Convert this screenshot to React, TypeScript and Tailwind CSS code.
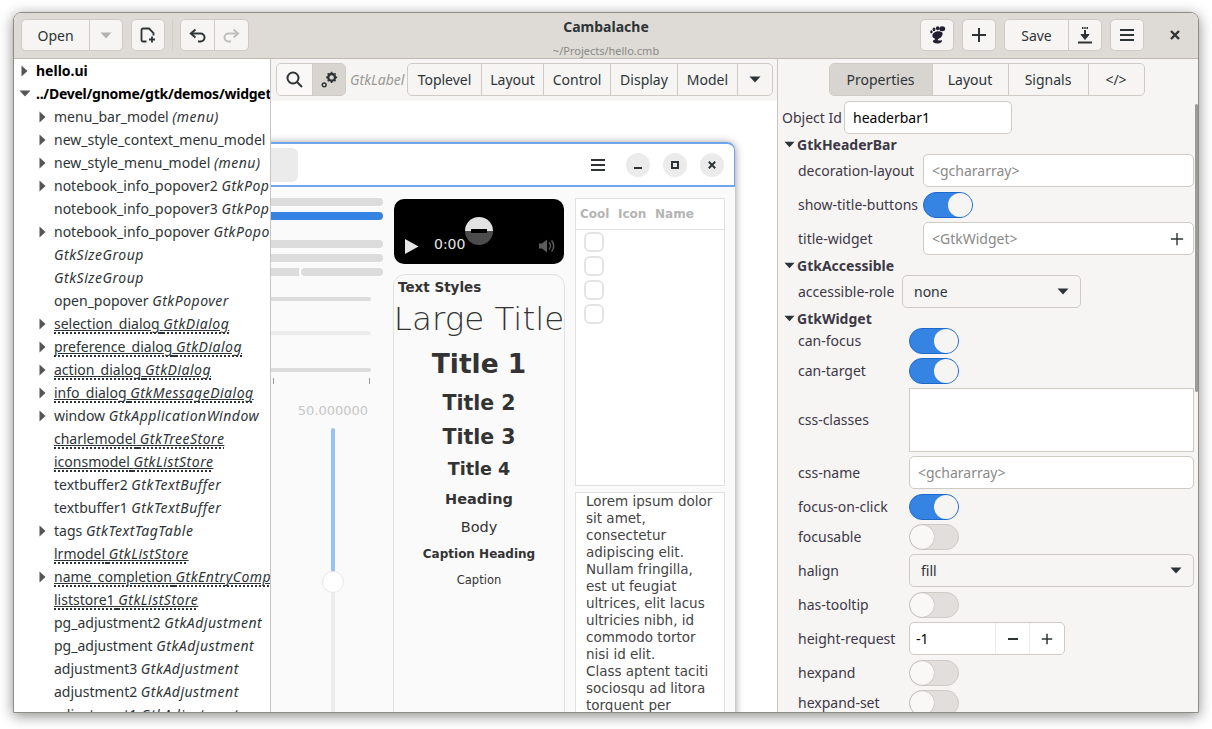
import { ReactNode } from "react"

interface TreeItem {
    name: string
    type?: string
    arrow?: boolean
    warn?: boolean
}

const treeItems: TreeItem[] = [
    { name: "menu_bar_model", type: "(menu)", arrow: true },
    { name: "new_style_context_menu_model", arrow: true },
    { name: "new_style_menu_model", type: "(menu)", arrow: true },
    { name: "notebook_info_popover2", type: "GtkPopover", arrow: true },
    { name: "notebook_info_popover3", type: "GtkPopover" },
    { name: "notebook_info_popover", type: "GtkPopover", arrow: true },
    { name: "", type: "GtkSizeGroup" },
    { name: "", type: "GtkSizeGroup" },
    { name: "open_popover", type: "GtkPopover" },
    { name: "selection_dialog", type: "GtkDialog", arrow: true, warn: true },
    { name: "preference_dialog", type: "GtkDialog", arrow: true, warn: true },
    { name: "action_dialog", type: "GtkDialog", arrow: true, warn: true },
    { name: "info_dialog", type: "GtkMessageDialog", arrow: true, warn: true },
    { name: "window", type: "GtkApplicationWindow", arrow: true },
    { name: "charlemodel", type: "GtkTreeStore", warn: true },
    { name: "iconsmodel", type: "GtkListStore", warn: true },
    { name: "textbuffer2", type: "GtkTextBuffer" },
    { name: "textbuffer1", type: "GtkTextBuffer" },
    { name: "tags", type: "GtkTextTagTable", arrow: true },
    { name: "lrmodel", type: "GtkListStore", warn: true },
    { name: "name_completion", type: "GtkEntryCompletion", arrow: true, warn: true },
    { name: "liststore1", type: "GtkListStore", warn: true },
    { name: "pg_adjustment2", type: "GtkAdjustment" },
    { name: "pg_adjustment", type: "GtkAdjustment" },
    { name: "adjustment3", type: "GtkAdjustment" },
    { name: "adjustment2", type: "GtkAdjustment" },
    { name: "adjustment1", type: "GtkAdjustment" },
]

const lorem = [
    "Lorem ipsum dolor",
    "sit amet,",
    "consectetur",
    "adipiscing elit.",
    "Nullam fringilla,",
    "est ut feugiat",
    "ultrices, elit lacus",
    "ultricies nibh, id",
    "commodo tortor",
    "nisi id elit.",
    "Class aptent taciti",
    "sociosqu ad litora",
    "torquent per",
]

const ArrowRight = () => (
    <svg width="7" height="12" viewBox="0 0 7 12" className="shrink-0"><path d="M0.5 0.5 L6.5 6 L0.5 11.5 Z" fill="#555" /></svg>
)

const ArrowDown = ({ color = "#555", w = 12 }: { color?: string, w?: number }) => (
    <svg width={w} height="7" viewBox="0 0 12 7" className="shrink-0"><path d="M0.5 0.5 H11.5 L6 6.5 Z" fill={color} /></svg>
)

const IconNew = () => (
    <svg width="16" height="16" viewBox="0 0 16 16" fill="none" stroke="#2e3436" strokeWidth="1.8">
        <path d="M6.5 14.5 H3 A1.5 1.5 0 0 1 1.5 13 V3 A1.5 1.5 0 0 1 3 1.5 H9 L13.5 6 V8.5" />
        <path d="M12 9.5 V15.5 M9 12.5 H15" />
    </svg>
)

const IconUndo = ({ color = "#2e3436", flip = false }: { color?: string, flip?: boolean }) => (
    <svg width="17" height="15" viewBox="0 0 17 15" fill="none" stroke={color} strokeWidth="2" className={flip ? "-scale-x-100" : ""}>
        <path d="M6.5 1.5 L1.8 5.5 L6.5 9.5" />
        <path d="M2 5.5 H11.5 A4 4 0 0 1 11.5 13.5 H9" />
    </svg>
)

const IconFoot = () => (
    <svg width="17" height="18" viewBox="0 0 17 18" fill="#241f31">
        <ellipse cx="13.2" cy="2.8" rx="3" ry="2.5" />
        <ellipse cx="8.6" cy="2.2" rx="1.7" ry="2" />
        <ellipse cx="5" cy="3.4" rx="1.4" ry="1.8" />
        <ellipse cx="2.4" cy="5.8" rx="1.2" ry="1.6" />
        <path d="M11 5.4 C7 4.8 3 7 3.4 10.2 C3.7 12.2 6.2 12 6.1 13.1 C5.9 14.4 4 14 3.8 15.2 C3.6 16.8 7 18.2 10.4 17.2 C12.6 16.6 13.6 15 13 14.4 C12 13.6 9.6 15.2 8.9 14 C8.3 12.8 10.8 12.6 12.2 11 C14 9 14.6 5.8 11 5.4 Z" />
    </svg>
)

const IconPlus = ({ size = 16, sw = 2 }: { size?: number, sw?: number }) => (
    <svg width={size} height={size} viewBox="0 0 16 16" fill="none" stroke="#2e3436" strokeWidth={sw}><path d="M8 1 V15 M1 8 H15" /></svg>
)

const IconMinus = () => (
    <svg width="12" height="12" viewBox="0 0 12 12" fill="none" stroke="#2e3436" strokeWidth="2"><path d="M1 6 H11" /></svg>
)

const IconSaveAs = () => (
    <svg width="14" height="17" viewBox="0 0 14 17" fill="none" stroke="#2e3436">
        <path d="M4 1 H5.5 M6.3 1 H7.7 M8.5 1 H10" strokeWidth="2" />
        <path d="M7 3 V11" strokeWidth="2" />
        <path d="M3 7.5 L7 12.5 L11 7.5 Z" fill="#2e3436" strokeWidth="1" />
        <path d="M0 15.5 H14" strokeWidth="2" />
    </svg>
)

const IconMenu = () => (
    <svg width="14" height="12" viewBox="0 0 14 12" fill="none" stroke="#2e3436" strokeWidth="2"><path d="M0 1 H14 M0 6 H14 M0 11 H14" /></svg>
)

const IconClose = ({ size = 10 }: { size?: number }) => (
    <svg width={size} height={size} viewBox="0 0 10 10" fill="none" stroke="#2e3436" strokeWidth="2.4"><path d="M1 1 L9 9 M9 1 L1 9" /></svg>
)

const IconSearch = () => (
    <svg width="17" height="17" viewBox="0 0 17 17" fill="none" stroke="#2e3436" strokeWidth="2">
        <circle cx="7" cy="7" r="5.5" />
        <path d="M11 11 L16 16" />
    </svg>
)

const IconGear = () => (
    <svg width="17" height="17" viewBox="0 0 16 16" fill="none" stroke="#2e3436">
        <circle cx="10" cy="6" r="3.2" strokeWidth="2.2" />
        <path d="M10 0.8 V11.2 M4.8 6 H15.2 M6.3 2.3 L13.7 9.7 M13.7 2.3 L6.3 9.7" strokeWidth="1.6" strokeDasharray="1.8 6.8" />
        <circle cx="3" cy="13" r="1.8" strokeWidth="1.4" />
    </svg>
)

const btn = "bg-[#f6f5f4] border border-[#cfcac4] rounded-[5px] h-[32px] flex items-center justify-center"

const HeaderBar = () => (
    <div className="relative h-[46px] shrink-0 bg-[#dedbd7] border-b border-[#bfb9b2] flex items-start pt-[6px] pl-[7px]">
        <div className={`${btn} w-[102px]`}>
            <div className="w-[67px] text-center">Open</div>
            <div className="flex-1 h-full border-l border-[#cfcac4] flex items-center justify-center"><ArrowDown color="#b5b3b0" /></div>
        </div>
        <div className={`${btn} w-[34px] ml-[8px]`}><IconNew /></div>
        <div className="w-px h-[32px] bg-[#d2cec9] ml-[7px]" />
        <div className={`${btn} w-[69px] ml-[7px]`}>
            <div className="w-[34px] h-full border-r border-[#cfcac4] flex items-center justify-center"><IconUndo /></div>
            <div className="flex-1 flex items-center justify-center"><IconUndo color="#c0bfbd" flip /></div>
        </div>
        <div className="absolute left-0 right-0 top-[4px] text-center pointer-events-none">
            <div className="font-bold text-[14px] leading-[20px] text-[#2e3436]">Cambalache</div>
            <div className="text-[11px] leading-[14px] mt-[7px] text-[#888a85]">~/Projects/hello.cmb</div>
        </div>
        <div className={`${btn} w-[34px] ml-auto`}><IconFoot /></div>
        <div className={`${btn} w-[34px] ml-[8px]`}><IconPlus /></div>
        <div className={`${btn} w-[98px] ml-[8px]`}>
            <div className="w-[63px] text-center">Save</div>
            <div className="flex-1 h-full border-l border-[#cfcac4] flex items-center justify-center"><IconSaveAs /></div>
        </div>
        <div className={`${btn} w-[34px] ml-[8px]`}><IconMenu /></div>
        <div className="w-[54px] h-[32px] flex items-center justify-center pl-[8px]"><IconClose /></div>
    </div>
)

const Warn = ({ children }: { children: ReactNode }) => (
    <span className="underline underline-offset-1">
        <span className="underline decoration-dotted decoration-2 underline-offset-[3px]">{children}</span>
    </span>
)

const TreeRow = ({ item }: { item: TreeItem }) => {
    const label = (
        <>
            {item.name}{item.name && item.type ? " " : ""}
            {item.type && <i className="tracking-[0.5px]">{item.type}</i>}
        </>
    )
    return (
        <div className="h-[23px] flex items-center pl-[25px] text-[#2e3436]">
            <div className="w-[15px] shrink-0">{item.arrow && <ArrowRight />}</div>
            <div>{item.warn ? <Warn>{label}</Warn> : label}</div>
        </div>
    )
}

const Tree = () => (
    <div className="w-[256px] shrink-0 bg-white overflow-hidden whitespace-nowrap">
        <div className="h-[23px] flex items-center pl-[7px] font-bold text-black">
            <div className="w-[15px] shrink-0"><ArrowRight /></div>hello.ui
        </div>
        <div className="h-[23px] flex items-center pl-[5px] font-bold text-black tracking-[-0.25px]">
            <div className="w-[17px] shrink-0"><ArrowDown /></div>../Devel/gnome/gtk/demos/widget-factory/
        </div>
        {treeItems.map((item, i) => <TreeRow key={i} item={item} />)}
    </div>
)

const Toolbar = () => (
    <div className="h-[42px] shrink-0 bg-[#f6f5f4] flex items-start pt-[4px] pl-[5px]">
        <div className="flex h-[33px] w-[70px] rounded-[5px] border border-[#cfcac4] overflow-hidden">
            <div className="w-[35px] bg-[#f9f8f7] flex items-center justify-center"><IconSearch /></div>
            <div className="flex-1 bg-[#d8d5d0] border-l border-[#cfcac4] flex items-center justify-center"><IconGear /></div>
        </div>
        <div className="w-[61px] h-[33px] flex items-center pl-[4px] italic text-[#9a9996] overflow-hidden">GtkLabel</div>
        <div className="flex h-[33px] rounded-[5px] border border-[#cfcac4] bg-[#f6f5f4] text-[#2e3436]">
            {["Toplevel", "Layout", "Control", "Display", "Model"].map((t, i) => (
                <div key={t} className={`flex items-center justify-center border-r border-[#cfcac4] ${["w-[74px]", "w-[62px]", "w-[67px]", "w-[67px]", "w-[60px]"][i]}`}>{t}</div>
            ))}
            <div className="w-[34px] flex items-center justify-center"><ArrowDown color="#2e3436" /></div>
        </div>
    </div>
)

const Bar = ({ className }: { className: string }) => <div className={`rounded-full ${className}`} />

const PreviewLeft = () => (
    <div className="w-[202px] shrink-0 flex flex-col">
        <Bar className="h-[8px] bg-[#dcdcdc]" />
        <Bar className="h-[8px] bg-[#3584e4] mt-[6px]" />
        <Bar className="h-[8px] bg-[#dcdcdc] mt-[20px]" />
        <Bar className="h-[8px] bg-[#dcdcdc] mt-[6px]" />
        <div className="flex mt-[6px] gap-[2px]">
            <div className="w-[118px] h-[8px] bg-[#dcdcdc]" />
            <Bar className="flex-1 h-[8px] bg-[#dcdcdc]" />
        </div>
        <Bar className="h-[4px] bg-[#dcdcdc] mt-[21px] mr-[12px]" />
        <Bar className="h-[4px] bg-[#ececec] mt-[30px] mr-[12px]" />
        <Bar className="h-[4px] bg-[#dcdcdc] mt-[33px] mr-[12px]" />
        <div className="flex justify-end mr-[13px] mt-[6px] gap-[95px]">
            <div className="w-px h-[6px] bg-[#9a9a9a]" />
            <div className="w-px h-[6px] bg-[#9a9a9a]" />
        </div>
        <div className="ml-auto w-[100px] flex flex-col items-center mt-[18px]">
            <div className="h-[17px] leading-[17px] text-[13px] text-[#c6c6c6]">50.000000</div>
            <div className="w-[4px] h-[144px] bg-[#99c1f1] mt-[9px] rounded-t-full" />
            <div className="w-[22px] h-[22px] rounded-full bg-white border border-[#e8e8e8] -my-px z-10" />
            <div className="w-[4px] h-[140px] bg-[#ececec]" />
        </div>
    </div>
)

const styleRow = "flex items-center justify-center text-[#333]"

const PreviewMiddle = () => (
    <div className="w-[172px] shrink-0 flex flex-col">
        <div className="relative h-[65px] mt-px mx-px bg-black rounded-[10px]">
            <svg className="absolute left-[71px] top-[18px]" width="28" height="28" viewBox="0 0 28 28">
                <path d="M0 14 A14 14 0 0 1 28 14 Z" fill="#e2e2e2" />
                <path d="M0 14 A14 14 0 0 0 28 14 Z" fill="#4c4c4c" />
                <rect x="6" y="12" width="16" height="4" fill="#000" />
            </svg>
            <svg className="absolute left-[11px] top-[40px]" width="14" height="15" viewBox="0 0 14 15"><path d="M0 0 L13.5 7.5 L0 15 Z" fill="#e6e6e6" /></svg>
            <div className="absolute left-[40px] top-[37px] text-[14px] leading-[17px] text-[#e6e6e6]">0:00</div>
            <svg className="absolute left-[145px] top-[40px]" width="16" height="14" viewBox="0 0 16 14" fill="none">
                <path d="M0 4.5 H3 L8 0.5 V13.5 L3 9.5 H0 Z" fill="#5c5c5c" />
                <path d="M10 3.5 A5 5 0 0 1 10 10.5 M12.5 1.5 A8 8 0 0 1 12.5 12.5" stroke="#5c5c5c" strokeWidth="1.5" />
            </svg>
        </div>
        <div className="mt-[10px] h-[500px] border border-[#e0e0e0] rounded-t-[12px] overflow-hidden">
            <div className="h-[25px] pl-[4px] flex items-center font-bold text-[13.5px] text-[#333]">Text Styles</div>
            <div className={`${styleRow} h-[38px] text-[32.5px] font-extralight whitespace-nowrap`}>Large Title</div>
            <div className={`${styleRow} h-[52px] text-[26.5px] font-bold`}>Title 1</div>
            <div className={`${styleRow} h-[28px] pb-[2px] text-[20.5px] font-bold`}>Title 2</div>
            <div className={`${styleRow} h-[39px] text-[20.5px] font-bold`}>Title 3</div>
            <div className={`${styleRow} h-[24px] text-[17.5px] font-bold`}>Title 4</div>
            <div className={`${styleRow} h-[38px] text-[14.5px] font-bold`}>Heading</div>
            <div className={`${styleRow} h-[18px] text-[14.5px]`}>Body</div>
            <div className={`${styleRow} h-[34px] text-[12px] font-bold`}>Caption Heading</div>
            <div className={`${styleRow} h-[18px] pt-[2px] text-[11.5px]`}>Caption</div>
        </div>
    </div>
)

const PreviewRight = () => (
    <div className="w-[150px] shrink-0 flex flex-col">
        <div className="h-[288px] border border-[#e0e0e0] bg-white">
            <div className="h-[31px] border-b border-[#e0e0e0] flex items-center font-bold text-[12px] text-[#b4b4b4]">
                <div className="w-[38px] pl-[4px]">Cool</div>
                <div className="w-[37px] pl-[4px]">Icon</div>
                <div className="pl-[4px]">Name</div>
            </div>
            <div className="flex flex-col gap-[4px] pt-[2px] pl-[8px]">
                {[0, 1, 2, 3].map(i => <div key={i} className="w-[20px] h-[20px] border-2 border-[#e4e4e4] rounded-[6px]" />)}
            </div>
        </div>
        <div className="mt-[6px] h-[260px] border border-[#e0e0e0] bg-white pl-[10px] text-[13.5px] leading-[17px] text-[#444] whitespace-nowrap">
            {lorem.map(l => <div key={l}>{l}</div>)}
        </div>
    </div>
)

const PreviewWindow = () => (
    <div className="absolute right-[42px] top-[41px] w-[564px] h-[640px] bg-[#fafafa] rounded-t-[8px] shadow-[0_1px_8px_rgba(0,0,0,0.45)] font-['DejaVu_Sans',sans-serif]">
        <div className="h-[45px] bg-white rounded-t-[8px] border-t-2 border-b-2 border-x border-[#6ea5ec] flex items-center justify-end">
            <div className="mr-[auto] ml-[85px] w-[41px] h-[34px] bg-[#ebebeb] rounded-[6px]" />
            <IconMenu />
            <div className="w-[24px] h-[24px] rounded-full bg-[#ebebeb] flex items-center justify-center ml-[21px] pt-[6px]"><div className="w-[8px] h-[2px] bg-[#2e3436]" /></div>
            <div className="w-[24px] h-[24px] rounded-full bg-[#ebebeb] flex items-center justify-center ml-[13px]"><div className="w-[8px] h-[8px] border-2 border-[#2e3436]" /></div>
            <div className="w-[24px] h-[24px] rounded-full bg-[#ebebeb] flex items-center justify-center ml-[13px] mr-[10px]"><IconClose size={8} /></div>
        </div>
        <div className="flex pt-[11px] pl-[10px] gap-[10px]">
            <PreviewLeft />
            <PreviewMiddle />
            <PreviewRight />
        </div>
    </div>
)

const Canvas = () => (
    <div className="w-[507px] shrink-0 flex flex-col border-l border-[#c9c4bd]">
        <Toolbar />
        <div className="relative flex-1 bg-white overflow-hidden">
            <PreviewWindow />
        </div>
    </div>
)

const Switch = ({ on }: { on?: boolean }) => (
    on ? (
        <div className="w-[50px] h-[26px] rounded-full bg-[#3584e4] border border-[#1b6acb] flex justify-end items-center">
            <div className="w-[24px] h-[24px] rounded-full bg-[#f6f5f4]" />
        </div>
    ) : (
        <div className="w-[50px] h-[26px] rounded-full bg-[#e1dedb] border border-[#cfcac4] flex items-center">
            <div className="w-[24px] h-[24px] rounded-full bg-[#f9f8f7] shadow-[0_0_1px_rgba(0,0,0,0.4)]" />
        </div>
    )
)

const entry = "h-[33px] bg-white border border-[#cfcac4] rounded-[5px] flex items-center pl-[8px]"

const Placeholder = ({ text, plus }: { text: string, plus?: boolean }) => (
    <div className={`${entry} text-[#8a8a88] justify-between pr-[9px]`}>
        {text}
        {plus && <IconPlus size={14} sw={1.6} />}
    </div>
)

const Select = ({ value, className }: { value: string, className?: string }) => (
    <div className={`h-[33px] bg-[#f6f5f4] border border-[#cfcac4] rounded-[5px] flex items-center justify-between pl-[11px] pr-[11px] text-[#2e3436] ${className ?? ""}`}>
        {value}
        <ArrowDown color="#2e3436" />
    </div>
)

const Row = ({ label, cols, mt, up, children }: { label: string, cols: string, mt: string, up?: boolean, children: ReactNode }) => (
    <div className={`grid items-center pl-[20px] pr-[4px] ${cols} ${mt}`}>
        <div className={`whitespace-nowrap text-[#3d3846] ${up ? "pb-[2px]" : ""}`}>{label}</div>
        {children}
    </div>
)

const Section = ({ title, mt }: { title: string, mt: string }) => (
    <div className={`h-[17px] flex items-center pl-[6px] gap-[2px] font-bold text-[#3d3846] ${mt}`}>
        <ArrowDown color="#2e3436" w={11} />{title}
    </div>
)

const g1 = "grid-cols-[125px_1fr]"
const g3 = "grid-cols-[111px_1fr]"

const Properties = () => (
    <div className="relative flex-1 bg-[#f6f5f4] border-l border-[#c9c4bd] flex flex-col overflow-hidden">
        <div className="flex justify-center pt-[4px] pr-[3px]">
            <div className="flex h-[33px] rounded-[5px] border border-[#cfcac4] text-[#2e3436]">
                <div className="w-[102px] bg-[#d8d5d0] flex items-center justify-center rounded-l-[4px]">Properties</div>
                <div className="w-[76px] border-l border-[#cfcac4] flex items-center justify-center">Layout</div>
                <div className="w-[80px] border-l border-[#cfcac4] flex items-center justify-center">Signals</div>
                <div className="w-[56px] border-l border-[#cfcac4] flex items-center justify-center">&lt;/&gt;</div>
            </div>
        </div>
        <div className="grid grid-cols-[62px_168px] items-center pl-[4px] mt-[5px]">
            <div className="whitespace-nowrap text-[#3d3846]">Object Id</div>
            <div className={`${entry} text-black`}>headerbar1</div>
        </div>
        <Section title="GtkHeaderBar" mt="mt-[2px]" />
        <Row label="decoration-layout" cols={g1} mt="mt-px"><Placeholder text="<gchararray>" /></Row>
        <Row label="show-title-buttons" cols={g1} mt="mt-[5px]" up><Switch on /></Row>
        <Row label="title-widget" cols={g1} mt="mt-[4px]"><Placeholder text="<GtkWidget>" plus /></Row>
        <Section title="GtkAccessible" mt="mt-[2px]" />
        <Row label="accessible-role" cols="grid-cols-[104px_179px]" mt="mt-px"><Select value="none" /></Row>
        <Section title="GtkWidget" mt="mt-[2px]" />
        <Row label="can-focus" cols={g3} mt="mt-px" up><Switch on /></Row>
        <Row label="can-target" cols={g3} mt="mt-[4px]" up><Switch on /></Row>
        <Row label="css-classes" cols={g3} mt="mt-[4px]" up><div className="h-[64px] bg-white border border-[#cfcac4]" /></Row>
        <Row label="css-name" cols={g3} mt="mt-[4px]"><Placeholder text="<gchararray>" /></Row>
        <Row label="focus-on-click" cols={g3} mt="mt-[5px]" up><Switch on /></Row>
        <Row label="focusable" cols={g3} mt="mt-[4px]" up><Switch /></Row>
        <Row label="halign" cols={g3} mt="mt-[4px]"><Select value="fill" /></Row>
        <Row label="has-tooltip" cols={g3} mt="mt-[5px]" up><Switch /></Row>
        <Row label="height-request" cols={g3} mt="mt-[4px]">
            <div className="w-[156px] h-[33px] flex bg-white border border-[#cfcac4] rounded-[5px] text-black">
                <div className="w-[85px] flex items-center pl-[6px]">-1</div>
                <div className="w-[34px] border-l border-[#ebebeb] flex items-center justify-center"><IconMinus /></div>
                <div className="flex-1 border-l border-[#ebebeb] flex items-center justify-center"><IconPlus size={12} /></div>
            </div>
        </Row>
        <Row label="hexpand" cols={g3} mt="mt-[5px]" up><Switch /></Row>
        <Row label="hexpand-set" cols={g3} mt="mt-[4px]" up><Switch /></Row>
        <div className="absolute right-0 top-[45px] w-[3px] h-[288px] bg-[#9a9a98] rounded-full" />
    </div>
)

const App = () => {
    return (
        <div className="w-[1212px] h-[729px] bg-white overflow-hidden pt-[12px] pl-[13px] font-['Noto_Sans',sans-serif] text-[14px] text-[#2e3436]">
            <div className="w-[1186px] h-[701px] rounded-t-[8px] border border-[#8f8c88] flex flex-col overflow-hidden shadow-[0_3px_14px_rgba(0,0,0,0.45)]">
                <HeaderBar />
                <div className="flex flex-1 min-h-0">
                    <Tree />
                    <Canvas />
                    <Properties />
                </div>
            </div>
        </div>
    )
}

export default App
